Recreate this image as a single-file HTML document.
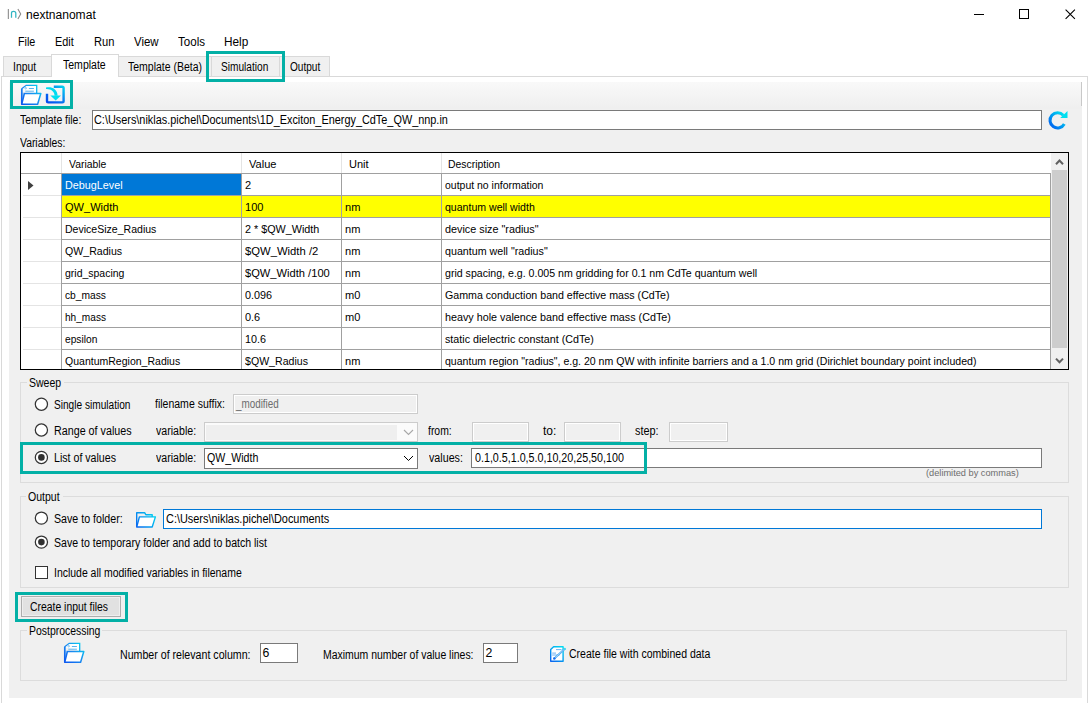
<!DOCTYPE html>
<html><head><meta charset="utf-8">
<style>
*{box-sizing:border-box;margin:0;padding:0}
html,body{width:1091px;height:703px;overflow:hidden;background:#fff}
body{position:relative;font-family:"Liberation Sans",sans-serif;color:#000}
.a{position:absolute}
.t{position:absolute;white-space:nowrap;font-size:11.5px;line-height:14px;letter-spacing:0;transform:scaleX(0.96);transform-origin:0 0}
.m{position:absolute;white-space:nowrap;font-size:12px;line-height:14px;letter-spacing:-0.1px}
.v{position:absolute;white-space:nowrap;font-size:12px;line-height:14px}
.u{position:absolute;white-space:nowrap;font-size:12.3px;line-height:14px}
.s{position:absolute;white-space:nowrap;font-size:9.2px;line-height:11px;color:#6d6d6d}
.grp{position:absolute;border:1px solid #dcdcdc}
.teal{position:absolute;border:3px solid #03b0a6;z-index:5}
.radio{position:absolute;width:13px;height:13px;border:1px solid #333;border-radius:50%;background:#fff}
.radio.on::after{content:"";position:absolute;left:2.5px;top:2.5px;width:6px;height:6px;border-radius:50%;background:#1a1a1a}
.tab{position:absolute;background:#f0f0f0;border:1px solid #d9d9d9;border-bottom:none}
</style></head><body>

<svg class="a" style="left:4px;top:6px" width="22" height="16" viewBox="0 0 22 16">
<rect x="3.8" y="3" width="1.1" height="10" fill="#8c8c8c"/>
<path d="M7.5 11.8V7Q7.5 5.3 9.6 5.3Q11.8 5.3 11.8 7.2V11.8" stroke="#33b5c2" stroke-width="1.25" fill="none"/>
<path d="M13.9 3.1L16.7 8L13.9 13" stroke="#8c8c8c" stroke-width="1.1" fill="none"/>
</svg>
<div class="m" style="left:26.2px;top:8.3px;letter-spacing:0;transform:scaleX(1.0050);transform-origin:0 0;">nextnanomat</div>
<div class="a" style="left:974px;top:14px;width:10px;height:1px;background:#000"></div>
<div class="a" style="left:1019px;top:9px;width:10px;height:10px;border:1px solid #000"></div>
<svg class="a" style="left:1065px;top:9px" width="11" height="11" viewBox="0 0 11 11"><path d="M0.6 0.6L9.9 9.9M9.9 0.6L0.6 9.9" stroke="#000" stroke-width="1.1"/></svg>
<div class="m" style="left:17.6px;top:34.8px;letter-spacing:0;transform:scaleX(0.8951);transform-origin:0 0;">File</div>
<div class="m" style="left:54.8px;top:34.8px;letter-spacing:0;transform:scaleX(0.9042);transform-origin:0 0;">Edit</div>
<div class="m" style="left:94.1px;top:34.8px;letter-spacing:0;transform:scaleX(0.9278);transform-origin:0 0;">Run</div>
<div class="m" style="left:134.2px;top:34.8px;letter-spacing:0;transform:scaleX(0.9530);transform-origin:0 0;">View</div>
<div class="m" style="left:178.2px;top:34.8px;letter-spacing:0;transform:scaleX(0.9638);transform-origin:0 0;">Tools</div>
<div class="m" style="left:223.8px;top:34.8px;letter-spacing:0;transform:scaleX(0.9838);transform-origin:0 0;">Help</div>
<div class="a" style="left:1px;top:76px;width:1087px;height:640px;border:1px solid #d9d9d9;background:#fff"></div>
<div class="tab" style="left:3px;top:56px;width:49px;height:20px"></div>
<div class="tab" style="left:118px;top:56px;width:94px;height:20px"></div>
<div class="tab" style="left:211px;top:56px;width:69px;height:20px"></div>
<div class="tab" style="left:279px;top:56px;width:51px;height:20px"></div>
<div class="tab" style="left:51px;top:54px;width:68px;height:24px;background:#fff"></div>
<div class="v" style="left:12.8px;top:59.8px;letter-spacing:0;transform:scaleX(0.8651);transform-origin:0 0;">Input</div>
<div class="v" style="left:63px;top:58.2px;letter-spacing:0;transform:scaleX(0.8772);transform-origin:0 0;">Template</div>
<div class="v" style="left:127.5px;top:59.8px;letter-spacing:0;transform:scaleX(0.8736);transform-origin:0 0;">Template (Beta)</div>
<div class="v" style="left:221.2px;top:59.6px;letter-spacing:0;transform:scaleX(0.8455);transform-origin:0 0;">Simulation</div>
<div class="v" style="left:289.6px;top:59.6px;letter-spacing:0;transform:scaleX(0.8395);transform-origin:0 0;">Output</div>
<div class="teal" style="left:206px;top:51px;width:79px;height:31px"></div>
<div class="a" style="left:9px;top:77px;width:1073px;height:32px;background:linear-gradient(#ffffff 0,#ffffff 5px,#f9f9f9 5px,#efefef 31px)"></div>
<div class="a" style="left:1081px;top:82px;width:1px;height:24px;background:#c8c8c8"></div>
<div class="a" style="left:9px;top:109px;width:1073px;height:589px;background:#f0f0f0"></div>
<div class="teal" style="left:10px;top:80px;width:63px;height:29px"></div>
<svg class="a" style="left:20.2px;top:84.2px" width="23" height="22" viewBox="0 0 23 22">
<defs><linearGradient id="fg1" gradientUnits="userSpaceOnUse" x1="0" y1="21" x2="22" y2="0"><stop offset="0" stop-color="#0a50f0"/><stop offset="0.5" stop-color="#1a8cf0"/><stop offset="1" stop-color="#00e4f0"/></linearGradient></defs>
<path d="M1.4 5L6.2 1.3H16.7V9" fill="#fff" stroke="url(#fg1)" stroke-width="1.3"/>
<path d="M8.9 4.5H13.9M5.3 7.2H13.9" stroke="#5ab4f0" stroke-width="1"/>
<circle cx="5.7" cy="4.2" r="0.8" fill="none" stroke="#5ab4f0" stroke-width="0.7"/>
<path d="M1.8 5V20.3" stroke="url(#fg1)" stroke-width="1.7"/>
<path d="M3 8.5V17.5" stroke="#3a90f0" stroke-width="0.7"/>
<path d="M4.4 9.5H20.8L17.6 20.2H1.7Z" fill="#fff" stroke="url(#fg1)" stroke-width="1.5" stroke-linejoin="round"/>
</svg>
<svg class="a" style="left:45px;top:85px" width="21" height="20" viewBox="0 0 21 20">
<defs><linearGradient id="g2" gradientUnits="userSpaceOnUse" x1="0" y1="20" x2="20" y2="0"><stop offset="0" stop-color="#0040f0"/><stop offset="0.55" stop-color="#0a78f0"/><stop offset="1" stop-color="#00e4f0"/></linearGradient></defs>
<path d="M8.8 1.8H17.3Q18.6 1.8 18.6 3.1V16.1Q18.6 17.4 17.3 17.4H3.3Q2 17.4 2 16.1V8.8" fill="none" stroke="url(#g2)" stroke-width="2.4"/>
<path d="M1 2.6C5 1.2 12.6 3 12.6 10.8L9.6 10.8C9.6 6.5 6 3.6 1 3.9Z" fill="#00daf0"/>
<path d="M5.3 10.6H16L10.7 15.6Z" fill="#00e0f0"/>
</svg>
<div class="v" style="left:19.5px;top:112.8px;letter-spacing:0;transform:scaleX(0.8669);transform-origin:0 0;">Template file:</div>
<div class="a" style="left:92px;top:110px;width:950px;height:20px;background:#fff;border:1px solid #7a7a7a"></div>
<div class="u" style="left:94.3px;top:112.7px;letter-spacing:0;transform:scaleX(0.8850);transform-origin:0 0;">C:\Users\niklas.pichel\Documents\1D_Exciton_Energy_CdTe_QW_nnp.in</div>
<svg class="a" style="left:1047px;top:110px" width="22" height="21" viewBox="0 0 22 21">
<defs><linearGradient id="g3" x1="0" y1="1" x2="1" y2="0"><stop offset="0" stop-color="#0058f0"/><stop offset="1" stop-color="#00e8f0"/></linearGradient></defs>
<path d="M16.3 5.3A7.6 7.6 0 1 0 17.3 14" fill="none" stroke="url(#g3)" stroke-width="3"/>
<path d="M20.5 1V8H13.2Z" fill="#00e0f0"/>
</svg>
<div class="v" style="left:20px;top:135.8px;letter-spacing:0;transform:scaleX(0.8631);transform-origin:0 0;">Variables:</div>
<div class="a" style="left:20px;top:152px;width:1049px;height:218px;border:1px solid #000;background:#fff"></div>
<div class="a" style="left:21px;top:173px;width:1030px;height:1px;background:#a0a0a0"></div>
<div class="a" style="left:61px;top:153px;width:1px;height:20px;background:#e4e4e4"></div>
<div class="a" style="left:241px;top:153px;width:1px;height:20px;background:#e4e4e4"></div>
<div class="a" style="left:341px;top:153px;width:1px;height:20px;background:#e4e4e4"></div>
<div class="a" style="left:441px;top:153px;width:1px;height:20px;background:#e4e4e4"></div>
<div class="t" style="left:69px;top:157.0px;letter-spacing:0;transform:scaleX(0.9037);transform-origin:0 0;">Variable</div>
<div class="t" style="left:249.2px;top:157.0px;">Value</div>
<div class="t" style="left:349.3px;top:157.0px;">Unit</div>
<div class="t" style="left:448.2px;top:157.0px;letter-spacing:0;transform:scaleX(0.9050);transform-origin:0 0;">Description</div>
<div class="a" style="left:62px;top:174px;width:179px;height:21px;background:#0078d7"></div>
<div class="a" style="left:62px;top:195px;width:989px;height:1px;background:#a0a0a0"></div>
<div class="a" style="left:23px;top:195px;width:38px;height:1px;background:#e4e4e4"></div>
<div class="t" style="left:65.0px;top:178.2px;letter-spacing:0;transform:scaleX(0.9371);transform-origin:0 0;color:#fff">DebugLevel</div>
<div class="t" style="left:245.0px;top:178.2px;color:#000">2</div>
<div class="t" style="left:345.0px;top:178.2px;color:#000"></div>
<div class="t" style="left:445.0px;top:178.2px;letter-spacing:0;transform:scaleX(0.9104);transform-origin:0 0;color:#000">output no information</div>
<div class="a" style="left:62px;top:196px;width:988px;height:21px;background:#ffff00"></div>
<div class="a" style="left:62px;top:217px;width:989px;height:1px;background:#a0a0a0"></div>
<div class="a" style="left:23px;top:217px;width:38px;height:1px;background:#e4e4e4"></div>
<div class="t" style="left:65.0px;top:200.2px;letter-spacing:0;transform:scaleX(0.9602);transform-origin:0 0;color:#000">QW_Width</div>
<div class="t" style="left:245.0px;top:200.2px;color:#000">100</div>
<div class="t" style="left:345.0px;top:200.2px;color:#000">nm</div>
<div class="t" style="left:445.0px;top:200.2px;letter-spacing:0;transform:scaleX(0.9178);transform-origin:0 0;color:#000">quantum well width</div>
<div class="a" style="left:62px;top:239px;width:989px;height:1px;background:#a0a0a0"></div>
<div class="a" style="left:23px;top:239px;width:38px;height:1px;background:#e4e4e4"></div>
<div class="t" style="left:65.0px;top:222.2px;letter-spacing:0;transform:scaleX(0.9163);transform-origin:0 0;color:#000">DeviceSize_Radius</div>
<div class="t" style="left:245.0px;top:222.2px;letter-spacing:0;transform:scaleX(0.9385);transform-origin:0 0;color:#000">2 * $QW_Width</div>
<div class="t" style="left:345.0px;top:222.2px;color:#000">nm</div>
<div class="t" style="left:445.0px;top:222.2px;letter-spacing:0;transform:scaleX(0.9398);transform-origin:0 0;color:#000">device size &quot;radius&quot;</div>
<div class="a" style="left:62px;top:261px;width:989px;height:1px;background:#a0a0a0"></div>
<div class="a" style="left:23px;top:261px;width:38px;height:1px;background:#e4e4e4"></div>
<div class="t" style="left:65.0px;top:244.2px;letter-spacing:0;transform:scaleX(0.9222);transform-origin:0 0;color:#000">QW_Radius</div>
<div class="t" style="left:245.0px;top:244.2px;letter-spacing:0;transform:scaleX(0.9801);transform-origin:0 0;color:#000">$QW_Width /2</div>
<div class="t" style="left:345.0px;top:244.2px;color:#000">nm</div>
<div class="t" style="left:445.0px;top:244.2px;letter-spacing:0;transform:scaleX(0.9297);transform-origin:0 0;color:#000">quantum well &quot;radius&quot;</div>
<div class="a" style="left:62px;top:283px;width:989px;height:1px;background:#a0a0a0"></div>
<div class="a" style="left:23px;top:283px;width:38px;height:1px;background:#e4e4e4"></div>
<div class="t" style="left:65.0px;top:266.2px;letter-spacing:0;transform:scaleX(0.9103);transform-origin:0 0;color:#000">grid_spacing</div>
<div class="t" style="left:245.0px;top:266.2px;letter-spacing:0;transform:scaleX(0.9682);transform-origin:0 0;color:#000">$QW_Width /100</div>
<div class="t" style="left:345.0px;top:266.2px;color:#000">nm</div>
<div class="t" style="left:445.0px;top:266.2px;letter-spacing:0;transform:scaleX(0.9212);transform-origin:0 0;color:#000">grid spacing, e.g. 0.005 nm gridding for 0.1 nm CdTe quantum well</div>
<div class="a" style="left:62px;top:305px;width:989px;height:1px;background:#a0a0a0"></div>
<div class="a" style="left:23px;top:305px;width:38px;height:1px;background:#e4e4e4"></div>
<div class="t" style="left:65.0px;top:288.2px;letter-spacing:0;transform:scaleX(0.8905);transform-origin:0 0;color:#000">cb_mass</div>
<div class="t" style="left:245.0px;top:288.2px;letter-spacing:0;transform:scaleX(0.9407);transform-origin:0 0;color:#000">0.096</div>
<div class="t" style="left:345.0px;top:288.2px;color:#000">m0</div>
<div class="t" style="left:445.0px;top:288.2px;letter-spacing:0;transform:scaleX(0.9253);transform-origin:0 0;color:#000">Gamma conduction band effective mass (CdTe)</div>
<div class="a" style="left:62px;top:327px;width:989px;height:1px;background:#a0a0a0"></div>
<div class="a" style="left:23px;top:327px;width:38px;height:1px;background:#e4e4e4"></div>
<div class="t" style="left:65.0px;top:310.2px;letter-spacing:0;transform:scaleX(0.8782);transform-origin:0 0;color:#000">hh_mass</div>
<div class="t" style="left:245.0px;top:310.2px;letter-spacing:0;transform:scaleX(0.9493);transform-origin:0 0;color:#000">0.6</div>
<div class="t" style="left:345.0px;top:310.2px;color:#000">m0</div>
<div class="t" style="left:445.0px;top:310.2px;letter-spacing:0;transform:scaleX(0.9355);transform-origin:0 0;color:#000">heavy hole valence band effective mass (CdTe)</div>
<div class="a" style="left:62px;top:349px;width:989px;height:1px;background:#a0a0a0"></div>
<div class="a" style="left:23px;top:349px;width:38px;height:1px;background:#e4e4e4"></div>
<div class="t" style="left:65.0px;top:332.2px;letter-spacing:0;transform:scaleX(0.8877);transform-origin:0 0;color:#000">epsilon</div>
<div class="t" style="left:245.0px;top:332.2px;letter-spacing:0;transform:scaleX(0.9369);transform-origin:0 0;color:#000">10.6</div>
<div class="t" style="left:345.0px;top:332.2px;color:#000"></div>
<div class="t" style="left:445.0px;top:332.2px;letter-spacing:0;transform:scaleX(0.9315);transform-origin:0 0;color:#000">static dielectric constant (CdTe)</div>
<div class="t" style="left:65.0px;top:354.2px;letter-spacing:0;transform:scaleX(0.9145);transform-origin:0 0;color:#000">QuantumRegion_Radius</div>
<div class="t" style="left:245.0px;top:354.2px;letter-spacing:0;transform:scaleX(0.9208);transform-origin:0 0;color:#000">$QW_Radius</div>
<div class="t" style="left:345.0px;top:354.2px;color:#000">nm</div>
<div class="t" style="left:445.0px;top:354.2px;letter-spacing:0;transform:scaleX(0.9179);transform-origin:0 0;color:#000">quantum region &quot;radius&quot;, e.g. 20 nm QW with infinite barriers and a 1.0 nm grid (Dirichlet boundary point included)</div>
<div class="a" style="left:61px;top:174px;width:1px;height:195px;background:#a0a0a0"></div>
<div class="a" style="left:241px;top:174px;width:1px;height:195px;background:#a0a0a0"></div>
<div class="a" style="left:341px;top:174px;width:1px;height:195px;background:#a0a0a0"></div>
<div class="a" style="left:441px;top:174px;width:1px;height:195px;background:#a0a0a0"></div>
<div class="a" style="left:1050px;top:174px;width:1px;height:195px;background:#a0a0a0"></div>
<svg class="a" style="left:28px;top:181px" width="6" height="10"><path d="M0 0L5.5 4.5L0 9Z" fill="#404040"/></svg>
<div class="a" style="left:1051px;top:153px;width:17px;height:216px;background:#f0f0f0"></div>
<div class="a" style="left:1052px;top:170px;width:15px;height:178px;background:#cdcdcd"></div>
<svg class="a" style="left:1055px;top:158px" width="9" height="8"><path d="M1 6.2L4.5 2.5L8 6.2" fill="none" stroke="#606060" stroke-width="2"/></svg>
<svg class="a" style="left:1055px;top:357px" width="9" height="8"><path d="M1 1.6L4.5 5.3L8 1.6" fill="none" stroke="#606060" stroke-width="2"/></svg>
<div class="grp" style="left:20px;top:382px;width:1049px;height:101px"></div>
<div class="a" style="left:26.900000000000002px;top:377px;width:37.3px;height:12px;background:#f0f0f0"></div>
<div class="v" style="left:29.1px;top:375.8px;letter-spacing:0;transform:scaleX(0.8753);transform-origin:0 0;">Sweep</div>
<svg class="a" style="left:33px;top:396px" width="16" height="16"><circle cx="8.40" cy="8.20" r="6.1" fill="#fff" stroke="#333" stroke-width="1.25"/></svg>
<div class="u" style="left:53.6px;top:397.7px;letter-spacing:0;transform:scaleX(0.8226);transform-origin:0 0;">Single simulation</div>
<div class="v" style="left:155px;top:397.3px;letter-spacing:0;transform:scaleX(0.8757);transform-origin:0 0;">filename suffix:</div>
<div class="a" style="left:233px;top:394px;width:185px;height:20px;background:#f0f0f0;border:1px solid #cccccc;box-shadow:inset 0 0 0 1px #fff"></div>
<div class="u" style="left:236px;top:397.2px;letter-spacing:0;transform:scaleX(0.8021);transform-origin:0 0;color:#6d6d6d">_modified</div>
<svg class="a" style="left:33px;top:422px" width="16" height="16"><circle cx="8.40" cy="8.00" r="6.1" fill="#fff" stroke="#333" stroke-width="1.25"/></svg>
<div class="u" style="left:53.6px;top:423.7px;letter-spacing:0;transform:scaleX(0.8732);transform-origin:0 0;">Range of values</div>
<div class="v" style="left:156px;top:423.8px;letter-spacing:0;transform:scaleX(0.8840);transform-origin:0 0;">variable:</div>
<div class="a" style="left:204px;top:422px;width:214px;height:20px;background:#fbfbfb;border:1px solid #cccccc"></div>
<div class="a" style="left:206px;top:425px;width:191px;height:15px;background:#efefef"></div>
<svg class="a" style="left:403px;top:429px" width="11" height="7"><path d="M1 1L5.5 5.5L10 1" fill="none" stroke="#a8a8a8" stroke-width="1.1"/></svg>
<div class="v" style="left:428px;top:423.8px;letter-spacing:0;transform:scaleX(0.8667);transform-origin:0 0;">from:</div>
<div class="a" style="left:472px;top:422px;width:57px;height:20px;background:#f0f0f0;border:1px solid #cccccc;box-shadow:inset 0 0 0 1px #fff"></div>
<div class="v" style="left:543px;top:423.8px;">to:</div>
<div class="a" style="left:564px;top:422px;width:57px;height:20px;background:#f0f0f0;border:1px solid #cccccc;box-shadow:inset 0 0 0 1px #fff"></div>
<div class="v" style="left:635px;top:423.8px;letter-spacing:0;transform:scaleX(0.9073);transform-origin:0 0;">step:</div>
<div class="a" style="left:669px;top:422px;width:59px;height:20px;background:#f0f0f0;border:1px solid #cccccc;box-shadow:inset 0 0 0 1px #fff"></div>
<svg class="a" style="left:33px;top:449px" width="16" height="16"><circle cx="8.40" cy="8.40" r="6.1" fill="#fff" stroke="#333" stroke-width="1.25"/><circle cx="8.40" cy="8.40" r="3.3" fill="#303030"/></svg>
<div class="u" style="left:53.6px;top:450.7px;letter-spacing:0;transform:scaleX(0.8638);transform-origin:0 0;">List of values</div>
<div class="v" style="left:156px;top:450.8px;letter-spacing:0;transform:scaleX(0.8840);transform-origin:0 0;">variable:</div>
<div class="a" style="left:204px;top:448px;width:214px;height:21px;background:#fff;border:1px solid #7a7a7a"></div>
<div class="u" style="left:206.5px;top:450.7px;letter-spacing:0;transform:scaleX(0.8640);transform-origin:0 0;">QW_Width</div>
<svg class="a" style="left:403px;top:455px" width="11" height="7"><path d="M1 1L5.5 5.5L10 1" fill="none" stroke="#000" stroke-width="1"/></svg>
<div class="v" style="left:428.7px;top:450.8px;letter-spacing:0;transform:scaleX(0.8915);transform-origin:0 0;">values:</div>
<div class="a" style="left:471px;top:448px;width:571px;height:20px;background:#fff;border:1px solid #7a7a7a"></div>
<div class="u" style="left:474.5px;top:450.7px;letter-spacing:0;transform:scaleX(0.8708);transform-origin:0 0;">0.1,0.5,1.0,5.0,10,20,25,50,100</div>
<div class="s" style="left:926px;top:468.2px;letter-spacing:0;transform:scaleX(1.0038);transform-origin:0 0;">(delimited by commas)</div>
<div class="teal" style="left:20px;top:442px;width:627px;height:32px"></div>
<div class="grp" style="left:20px;top:496px;width:1049px;height:92px"></div>
<div class="a" style="left:26.1px;top:491.5px;width:37.1px;height:12px;background:#f0f0f0"></div>
<div class="v" style="left:28.3px;top:490.3px;letter-spacing:0;transform:scaleX(0.8776);transform-origin:0 0;">Output</div>
<svg class="a" style="left:33px;top:510px" width="16" height="16"><circle cx="8.40" cy="8.10" r="6.1" fill="#fff" stroke="#333" stroke-width="1.25"/></svg>
<div class="u" style="left:53.7px;top:511.7px;letter-spacing:0;transform:scaleX(0.8659);transform-origin:0 0;">Save to folder:</div>
<svg class="a" style="left:135px;top:511px" width="22" height="18" viewBox="0 0 22 18">
<defs><linearGradient id="g4" gradientUnits="userSpaceOnUse" x1="0" y1="17" x2="20" y2="2"><stop offset="0" stop-color="#0a5cf0"/><stop offset="1" stop-color="#00d8f0"/></linearGradient></defs>
<path d="M1.7 16V1.7H9.6L10.8 3.7H17.2V6.5" fill="none" stroke="url(#g4)" stroke-width="1.4" stroke-linejoin="round"/>
<path d="M1.7 16H17.2L20.4 5.9H4.4Z" fill="#fff" stroke="url(#g4)" stroke-width="1.4" stroke-linejoin="round"/>
</svg>
<div class="a" style="left:163px;top:509px;width:879px;height:20px;background:#fff;border:1px solid #0078d7"></div>
<div class="u" style="left:165.7px;top:511.7px;letter-spacing:0;transform:scaleX(0.8874);transform-origin:0 0;">C:\Users\niklas.pichel\Documents</div>
<svg class="a" style="left:33px;top:534px" width="16" height="16"><circle cx="8.40" cy="8.10" r="6.1" fill="#fff" stroke="#333" stroke-width="1.25"/><circle cx="8.40" cy="8.10" r="3.3" fill="#303030"/></svg>
<div class="u" style="left:53.7px;top:535.7px;letter-spacing:0;transform:scaleX(0.8580);transform-origin:0 0;">Save to temporary folder and add to batch list</div>
<div class="a" style="left:35px;top:566px;width:13px;height:13px;background:#fff;border:1px solid #333"></div>
<div class="u" style="left:53.7px;top:565.7px;letter-spacing:0;transform:scaleX(0.8502);transform-origin:0 0;">Include all modified variables in filename</div>
<div class="a" style="left:21px;top:596px;width:100px;height:21px;background:#e1e1e1;border:1px solid #adadad;box-shadow:inset 0 0 0 1px #eeeeee"></div>
<div class="v" style="left:30px;top:599.8px;letter-spacing:0;transform:scaleX(0.8662);transform-origin:0 0;">Create input files</div>
<div class="teal" style="left:15px;top:592px;width:113px;height:30px"></div>
<div class="grp" style="left:20px;top:630px;width:1047px;height:51px"></div>
<div class="a" style="left:26.6px;top:625px;width:75.7px;height:12px;background:#f0f0f0"></div>
<div class="v" style="left:28.8px;top:623.8px;letter-spacing:0;transform:scaleX(0.8701);transform-origin:0 0;">Postprocessing</div>
<svg class="a" style="left:63px;top:642px" width="23" height="22" viewBox="0 0 23 22">
<defs><linearGradient id="fg2" gradientUnits="userSpaceOnUse" x1="0" y1="21" x2="22" y2="0"><stop offset="0" stop-color="#0a50f0"/><stop offset="0.5" stop-color="#1a8cf0"/><stop offset="1" stop-color="#00e4f0"/></linearGradient></defs>
<path d="M1.4 5L6.2 1.3H16.7V9" fill="#fff" stroke="url(#fg2)" stroke-width="1.3"/>
<path d="M8.9 4.5H13.9M5.3 7.2H13.9" stroke="#5ab4f0" stroke-width="1"/>
<circle cx="5.7" cy="4.2" r="0.8" fill="none" stroke="#5ab4f0" stroke-width="0.7"/>
<path d="M1.8 5V20.3" stroke="url(#fg2)" stroke-width="1.7"/>
<path d="M3 8.5V17.5" stroke="#3a90f0" stroke-width="0.7"/>
<path d="M4.4 9.5H20.8L17.6 20.2H1.7Z" fill="#fff" stroke="url(#fg2)" stroke-width="1.5" stroke-linejoin="round"/>
</svg>
<div class="u" style="left:120.4px;top:647.7px;letter-spacing:0;transform:scaleX(0.8641);transform-origin:0 0;">Number of relevant column:</div>
<div class="a" style="left:260px;top:643px;width:38px;height:20px;background:#fff;border:1px solid #7a7a7a"></div>
<div class="u" style="left:262.6px;top:646.3px;">6</div>
<div class="u" style="left:323.1px;top:647.7px;letter-spacing:0;transform:scaleX(0.8503);transform-origin:0 0;">Maximum number of value lines:</div>
<div class="a" style="left:483px;top:643px;width:35px;height:20px;background:#fff;border:1px solid #7a7a7a"></div>
<div class="u" style="left:485.6px;top:646.3px;">2</div>
<svg class="a" style="left:548px;top:644px" width="20" height="20" viewBox="0 0 20 20">
<defs><linearGradient id="g6" gradientUnits="userSpaceOnUse" x1="2" y1="18" x2="16" y2="2"><stop offset="0" stop-color="#0a5cf0"/><stop offset="1" stop-color="#00e4f0"/></linearGradient></defs>
<path d="M2.7 5.6L5.6 2.7H15.1V17.3H2.7Z" fill="#fff" stroke="url(#g6)" stroke-width="1.4" stroke-linejoin="round"/>
<path d="M8 5.6H13.5M4.2 9.1H8M4.2 11H11.5" stroke="#5aa8f0" stroke-width="0.9"/>
<path d="M6.2 14.6L16.6 5" stroke="#3aa0f0" stroke-width="1.8"/>
<path d="M6.2 14.6L16.6 5" stroke="#e8f6ff" stroke-width="0.6"/>
<circle cx="6.3" cy="14.5" r="1.3" fill="#1a70f0"/>
<circle cx="16.8" cy="4.9" r="1.2" fill="#40d8f0"/>
</svg>
<div class="u" style="left:569.3px;top:646.7px;letter-spacing:0;transform:scaleX(0.8546);transform-origin:0 0;">Create file with combined data</div>
</body></html>
